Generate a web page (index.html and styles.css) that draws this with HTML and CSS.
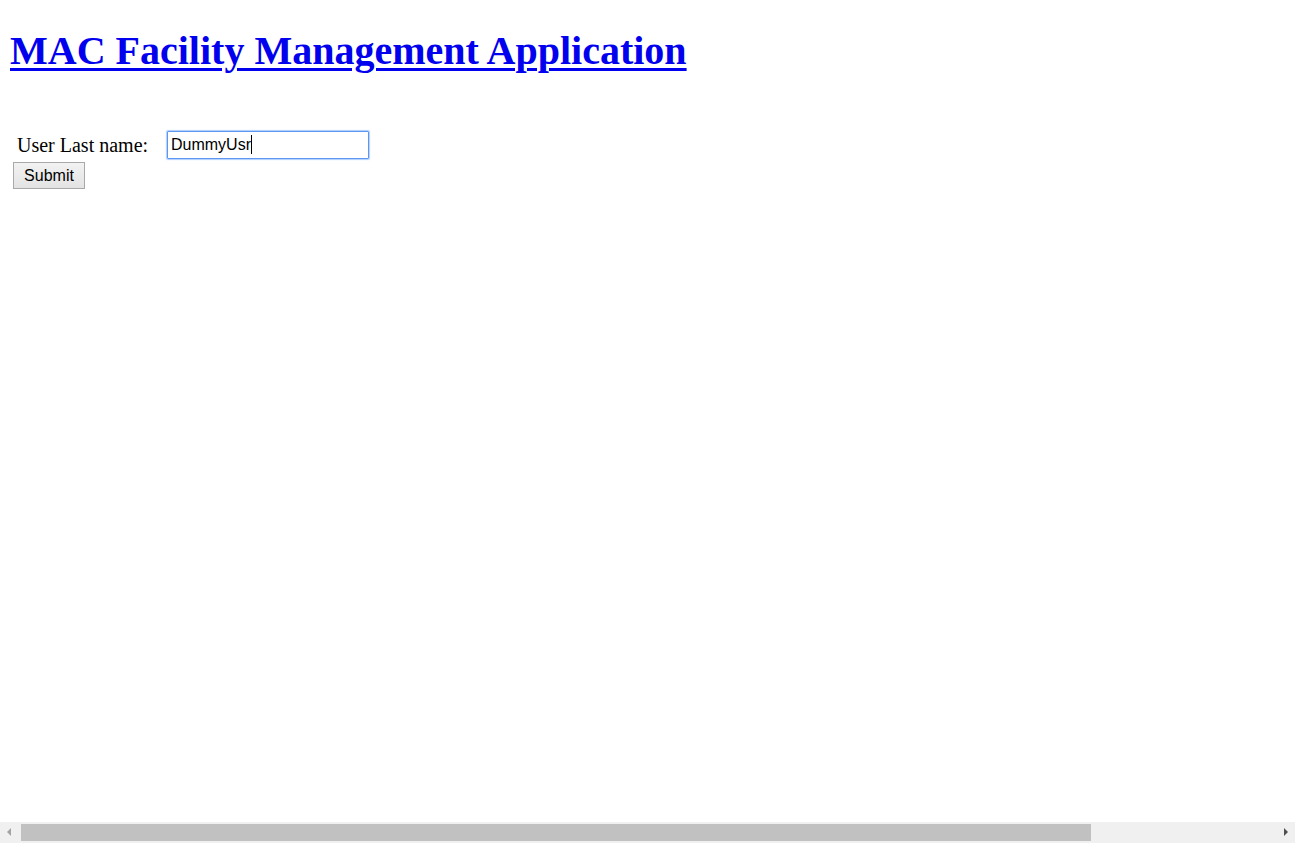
FILE: index.html
```html
<!DOCTYPE html>
<html lang="en">
<head>
<meta charset="utf-8">
<title>MAC Facility Management Application</title>
<link rel="stylesheet" href="styles.css">
</head>
<body>
<div class="page">
  <h1 class="title"><a href="#" class="title-link">MAC Facility Management Application</a></h1>
  <form class="login-form" onsubmit="return false;">
    <div class="field-row">
      <label class="field-label" for="lastname">User Last name:</label>
      <div class="field-input"><span class="input-text">DummyUsr</span><span class="caret"></span></div>
    </div>
    <div class="button-row">
      <button type="submit" class="submit-btn">Submit</button>
    </div>
  </form>
</div>
<div class="hscroll">
  <span class="arrow arrow-left"></span>
  <div class="track"><div class="thumb"></div></div>
  <span class="arrow arrow-right"></span>
</div>
</body>
</html>
```

FILE: styles.css
```css
html, body {
  margin: 0;
  padding: 0;
  background: #ffffff;
}

body {
  font-family: "Liberation Serif", "Times New Roman", serif;
  color: #000000;
  overflow: hidden;
  height: 843px;
}

.page {
  padding: 0 10px;
}

.title {
  margin: 28px 0 0 0;
  font-size: 40px;
  font-weight: bold;
  line-height: 46px;
}

.title-link {
  color: #0000ee;
  text-decoration: underline;
  text-decoration-thickness: 3px;
  text-underline-offset: 4px;
}

.login-form {
  margin-top: 56px;
}

.field-row {
  display: flex;
  align-items: center;
  padding-left: 7px;
  height: 29px;
}

.field-label {
  font-size: 20px;
  width: 150px;
  line-height: 23px;
  padding-top: 2px;
}

.field-input {
  box-sizing: border-box;
  width: 202px;
  height: 28px;
  border: 1px solid #5c97f0;
  box-shadow: 0 0 1px 1px rgba(77, 144, 254, 0.45);
  border-radius: 1px;
  display: flex;
  align-items: center;
  padding-left: 3px;
  font-family: "Liberation Sans", Arial, sans-serif;
  font-size: 16px;
}

.caret {
  display: inline-block;
  width: 1px;
  height: 19px;
  background: #000;
}

.button-row {
  display: flex;
  padding-left: 3px;
  margin-top: 3px;
}

.submit-btn {
  box-sizing: border-box;
  width: 72px;
  height: 27px;
  margin: 0;
  padding: 0;
  font-family: "Liberation Sans", Arial, sans-serif;
  font-size: 16px;
  color: #000;
  background: linear-gradient(#f2f2f2, #e3e3e3);
  border: 1px solid #a9a9a9;
  border-radius: 0;
}

.hscroll {
  position: fixed;
  left: 0;
  right: 0;
  bottom: 0;
  height: 21px;
  background: #f0f0f0;
  display: flex;
  align-items: center;
}

.track {
  flex: 1;
  height: 17px;
  position: relative;
}

.thumb {
  position: absolute;
  left: 4px;
  top: 0;
  width: 1070px;
  height: 17px;
  background: #c1c1c1;
}

.arrow {
  width: 17px;
  height: 17px;
  position: relative;
}

.arrow-left::after {
  content: "";
  position: absolute;
  left: 7px;
  top: 4px;
  border-top: 4px solid transparent;
  border-bottom: 4px solid transparent;
  border-right: 4px solid #a3a3a3;
}

.arrow-right::after {
  content: "";
  position: absolute;
  left: 6px;
  top: 4px;
  border-top: 4px solid transparent;
  border-bottom: 4px solid transparent;
  border-left: 4px solid #505050;
}
```
